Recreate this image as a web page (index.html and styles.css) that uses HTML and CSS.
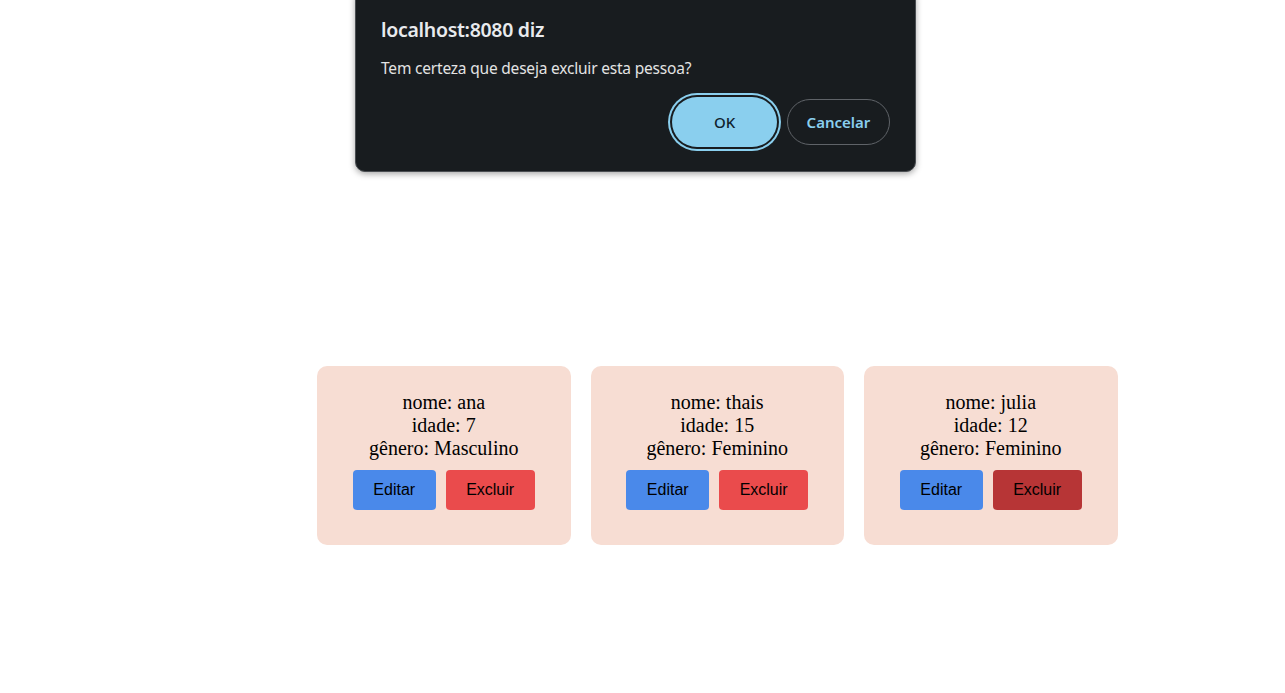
FILE: index.html
```html
<!DOCTYPE html>
<html lang="pt-BR">
<head>
<meta charset="utf-8">
<title>Pessoas</title>
<link rel="stylesheet" href="styles.css">
</head>
<body>
<main class="lista">
  <div class="card">
    <p class="info">nome: ana<br>idade: 7<br>gênero: Masculino</p>
    <div class="acoes">
      <button class="btn editar">Editar</button>
      <button class="btn excluir">Excluir</button>
    </div>
  </div>
  <div class="card">
    <p class="info">nome: thais<br>idade: 15<br>gênero: Feminino</p>
    <div class="acoes">
      <button class="btn editar">Editar</button>
      <button class="btn excluir">Excluir</button>
    </div>
  </div>
  <div class="card">
    <p class="info">nome: julia<br>idade: 12<br>gênero: Feminino</p>
    <div class="acoes">
      <button class="btn editar">Editar</button>
      <button class="btn excluir ativo">Excluir</button>
    </div>
  </div>
</main>

<div class="dialogo">
  <h1 class="dialogo-titulo">localhost:8080 diz</h1>
  <p class="dialogo-msg">Tem certeza que deseja excluir esta pessoa?</p>
  <div class="dialogo-acoes">
    <button class="dbtn ok">OK</button>
    <button class="dbtn cancelar">Cancelar</button>
  </div>
</div>
</body>
</html>
```

FILE: styles.css
```css
html, body {
  margin: 0;
  padding: 0;
  background: #ffffff;
}

body {
  width: 1285px;
  height: 693px;
  overflow: hidden;
  font-family: "Liberation Serif", "Times New Roman", serif;
}

.lista {
  display: flex;
  gap: 20px;
  padding: 366px 0 0 317px;
}

.card {
  flex: 0 0 253.5px;
  box-sizing: border-box;
  height: 179px;
  background: #f7ddd3;
  border-radius: 10px;
  padding: 25px 10px 0;
  text-align: center;
}

.info {
  margin: 0;
  font-size: 20px;
  line-height: 23px;
  color: #000;
}

.acoes {
  display: flex;
  justify-content: center;
  gap: 10px;
  margin-top: 10px;
}

.btn {
  height: 40px;
  padding: 0 20.5px;
  border: none;
  border-radius: 4px;
  font-family: "Liberation Sans", Arial, sans-serif;
  font-size: 16px;
  color: #000;
}

.editar { background: #4a89ea; }
.excluir { background: #ea4b4c; }
.excluir.ativo { background: #b73536; }

.dialogo {
  position: absolute;
  left: 355px;
  top: -12px;
  width: 561px;
  height: 184px;
  box-sizing: border-box;
  background: #181c1f;
  border: 1px solid #4a4e52;
  border-radius: 10px;
  box-shadow: 0 2px 6px rgba(0, 0, 0, 0.35);
  padding: 28px 25px 0;
  font-family: "Noto Sans", "Open Sans", sans-serif;
}

.dialogo-titulo {
  margin: 0;
  font-size: 19.5px;
  font-weight: 600;
  line-height: 26px;
  color: #e8eaed;
  letter-spacing: -0.3px;
}

.dialogo-msg {
  margin: 14px 0 0;
  font-size: 15.5px;
  line-height: 22px;
  color: #e3e3e3;
  letter-spacing: -0.2px;
}

.dialogo-acoes {
  display: flex;
  justify-content: flex-end;
  align-items: center;
  gap: 10px;
  margin-top: 18px;
}

.dbtn {
  height: 46px;
  border-radius: 23px;
  font-family: "Noto Sans", "Open Sans", sans-serif;
  font-size: 15px;
  font-weight: 600;
}

.ok {
  width: 105px;
  height: 50px;
  border-radius: 25px;
  background: #8acfee;
  color: #10222c;
  border: none;
  font-weight: 500;
  box-shadow: 0 0 0 2px #181c1f, 0 0 0 4px #8acfee;
}

.cancelar {
  width: 103px;
  background: transparent;
  border: 1px solid #5f6368;
  color: #8acfee;
}
```
